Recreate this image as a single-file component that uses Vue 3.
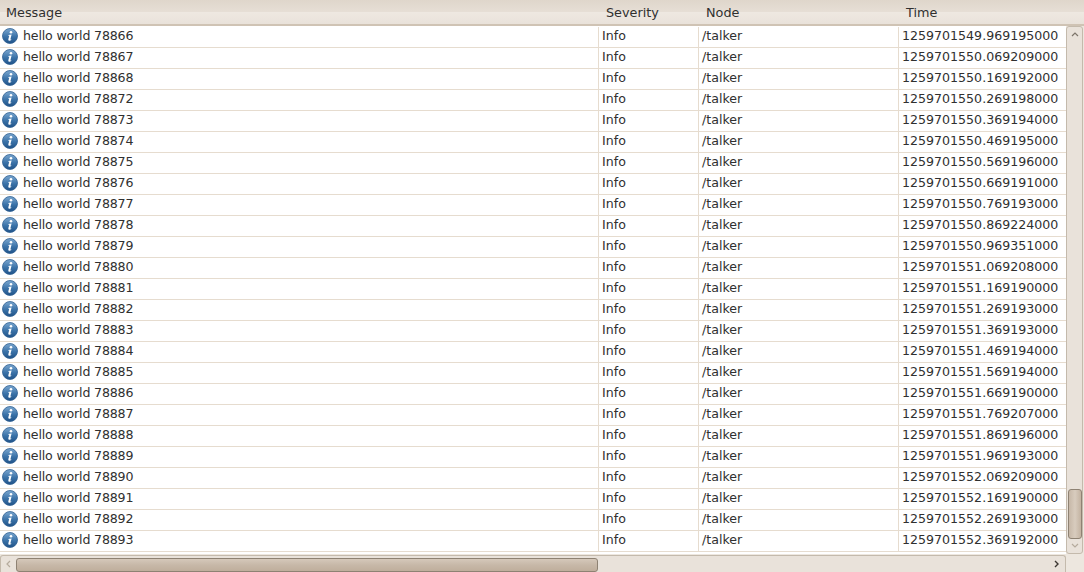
<script setup>
const rows = [
  [78866, '1259701549.969195000'], [78867, '1259701550.069209000'], [78868, '1259701550.169192000'],
  [78872, '1259701550.269198000'], [78873, '1259701550.369194000'], [78874, '1259701550.469195000'],
  [78875, '1259701550.569196000'], [78876, '1259701550.669191000'], [78877, '1259701550.769193000'],
  [78878, '1259701550.869224000'], [78879, '1259701550.969351000'], [78880, '1259701551.069208000'],
  [78881, '1259701551.169190000'], [78882, '1259701551.269193000'], [78883, '1259701551.369193000'],
  [78884, '1259701551.469194000'], [78885, '1259701551.569194000'], [78886, '1259701551.669190000'],
  [78887, '1259701551.769207000'], [78888, '1259701551.869196000'], [78889, '1259701551.969193000'],
  [78890, '1259701552.069209000'], [78891, '1259701552.169190000'], [78892, '1259701552.269193000'],
  [78893, '1259701552.369192000']
]
</script>

<template>
  <div class="app">
    <div class="header">
      <div class="hcell hmsg">Message</div>
      <div class="hcell hsev">Severity</div>
      <div class="hcell hnode">Node</div>
      <div class="hcell htime">Time</div>
    </div>
    <div class="middle">
      <div class="list">
        <div v-for="r in rows" :key="r[0]" class="row">
          <div class="cell msg">
            <svg class="icon" width="16" height="16" viewBox="0 0 16 16">
              <defs>
                <linearGradient id="ig" x1="0" y1="0" x2="0" y2="1">
                  <stop offset="0" stop-color="#7ba7d0" />
                  <stop offset="0.55" stop-color="#3a72a8" />
                  <stop offset="1" stop-color="#1f5288" />
                </linearGradient>
              </defs>
              <circle cx="8" cy="8" r="7.5" fill="url(#ig)" stroke="#2f5f92" stroke-width="0.8" />
              <circle cx="9" cy="4.2" r="1.3" fill="#fff" />
              <path d="M6.2 6.9 L9.6 6.5 L8.4 11.2 Q8.3 11.9 9.4 11.4 L9.3 12.1 Q7.6 13 6.6 12.5 Q6.1 12.1 6.4 11.1 L7.3 7.7 L6.2 7.6 Z" fill="#fff" />
            </svg>
            <span class="msgtext">hello world {{ r[0] }}</span>
          </div>
          <div class="cell sev">Info</div>
          <div class="cell node">/talker</div>
          <div class="cell time">{{ r[1] }}</div>
        </div>
      </div>
      <div class="vbar">
        <svg class="arrow" width="8" height="5" viewBox="0 0 8 5"><path d="M1 4 L4 1 L7 4" fill="none" stroke="#7d756a" stroke-width="1.2" /></svg>
        <div class="vtrack">
          <div class="vthumb"></div>
        </div>
        <svg class="arrow" width="8" height="5" viewBox="0 0 8 5"><path d="M1 1 L4 4 L7 1" fill="none" stroke="#b5ab9d" stroke-width="1.2" /></svg>
      </div>
    </div>
    <div class="bottom">
      <div class="hbar">
        <svg class="arrow" width="5" height="8" viewBox="0 0 5 8"><path d="M4 1 L1 4 L4 7" fill="none" stroke="#b5ab9d" stroke-width="1.2" /></svg>
        <div class="hthumb"></div>
        <div class="hspace"></div>
        <svg class="arrow" width="5" height="8" viewBox="0 0 5 8"><path d="M1 1 L4 4 L1 7" fill="none" stroke="#3c3732" stroke-width="1.4" /></svg>
      </div>
    </div>
  </div>
</template>

<style>
html, body { margin: 0; padding: 0; background: #ede7df; }
</style>

<style scoped>
.app {
  width: 1084px;
  height: 572px;
  display: flex;
  flex-direction: column;
  overflow: hidden;
  font-family: "DejaVu Sans", sans-serif;
  font-size: 12.6px;
  color: #303030;
  background: #ede7df;
}
.header {
  height: 26px;
  flex: none;
  box-sizing: border-box;
  display: flex;
  font-size: 12.8px;
  background: linear-gradient(#dfd6cb 0, #e6ded5 48%, #eee8e1 52%, #e9e2da 100%);
  border-bottom: 2px solid #cfc3b4;
}
.hcell { line-height: 25px; padding-left: 6px; box-sizing: border-box; }
.hmsg { width: 600px; }
.hsev { width: 100px; }
.hnode { width: 200px; }
.htime { width: 160px; }
.middle { flex: 1; display: flex; min-height: 0; margin-bottom: 1px; }
.list {
  width: 1066px;
  flex: none;
  background: #fff;
  padding-top: 1px;
  box-sizing: border-box;
  overflow: hidden;
}
.row {
  display: grid;
  grid-template-columns: 598px 100px 200px 168px;
  height: 21px;
  box-sizing: border-box;
  border-bottom: 1px solid #e6dccf;
}
.cell {
  display: flex;
  align-items: center;
  height: 20px;
  box-sizing: border-box;
  padding-left: 3px;
  padding-bottom: 4px;
  white-space: nowrap;
}
.msg { padding-left: 2px; gap: 5px; }
.msgtext { letter-spacing: -0.17px; }
.sev, .node, .time { border-left: 1px solid #e6dccf; }
.icon { flex: none; margin-top: 2px; }
.vbar {
  width: 17px;
  flex: none;
  display: flex;
  flex-direction: column;
  align-items: center;
  box-sizing: border-box;
  padding: 5px 0;
  background: #e9e2da;
  border: 1px solid #c4baac;
  border-radius: 3px;
}
.arrow { flex: none; }
.vtrack {
  flex: 1;
  width: 100%;
  display: flex;
  flex-direction: column;
  justify-content: flex-end;
  align-items: flex-start;
  padding: 0 0 4px 1px;
  box-sizing: border-box;
}
.vthumb {
  width: 14px;
  height: 50px;
  box-sizing: border-box;
  border: 1px solid #8e8273;
  border-radius: 3px;
  background: linear-gradient(90deg, #c7b8a8, #d8ccbe 50%, #c3b3a2);
}
.bottom { height: 17px; flex: none; }
.hbar {
  width: 1066px;
  height: 17px;
  display: flex;
  align-items: center;
  box-sizing: border-box;
  padding: 0 6px 0 5px;
  background: #e9e2da;
  border: 1px solid #c4baac;
  border-bottom: none;
  border-radius: 3px 3px 0 0;
}
.hthumb {
  width: 582px;
  height: 14px;
  margin-left: 5px;
  margin-top: 1px;
  flex: none;
  box-sizing: border-box;
  border: 1px solid #8e8273;
  border-radius: 3px;
  background: linear-gradient(#d5c8ba, #c7b8a8 50%, #bfae9c);
}
.hspace { flex: 1; }
</style>
